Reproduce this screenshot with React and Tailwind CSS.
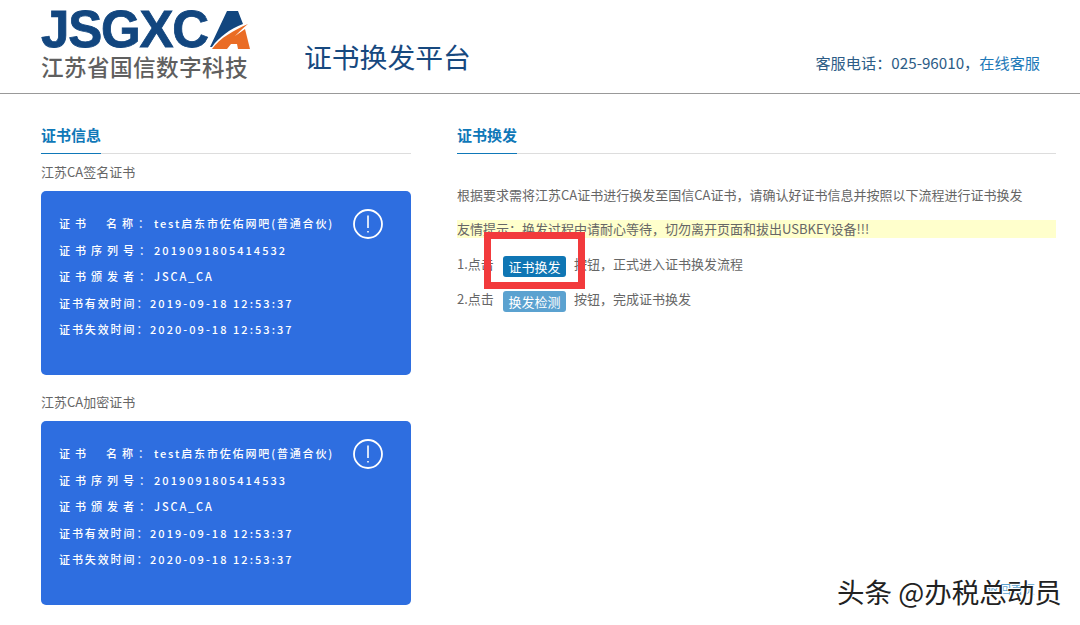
import React from "react";

const FONT = "font-['Noto_Sans_CJK_SC','Noto_Sans',sans-serif]";

function LogoA() {
  return (
    <svg width="40" height="38" viewBox="0 0 40 38" className="shrink-0">
      <path d="M17 0 H28 L33 13 C20 18 9 26 2 36 H0 Z" fill="#12467f" />
      <path d="M38 13 C24 19 10 27 2 38 H17 L21 33 H27 L28 38 H40 L35 18 L25 25 C29 21 33 17 38 13 Z" fill="#ea6c25" />
    </svg>
  );
}

function AlertIcon() {
  return (
    <svg width="30" height="30" viewBox="0 0 30 30" className="shrink-0">
      <circle cx="15" cy="15" r="14" fill="none" stroke="white" strokeWidth="1.8" />
      <path d="M15 6.5 V19 M15 22 V23.5" stroke="white" strokeWidth="1.6" />
    </svg>
  );
}

function Row({ label, value, wide, digits }) {
  return (
    <div className="flex h-[26.5px] items-center text-[11px] font-medium text-white whitespace-pre">
      <span className={wide ? "w-[91px] tracking-[1.9px]" : "w-[95px] tracking-[5px]"}>{label}</span>
      <span className={digits ? "tracking-[2.05px]" : "tracking-[1.85px]"}>{value}</span>
    </div>
  );
}

function CertCard({ name, serial, start, end }) {
  return (
    <div className="relative h-[184px] rounded-[5px] bg-[#2e6ee0] pl-[18px] pt-[19px]">
      <Row label="证书  名称：" value={name} />
      <Row label="证书序列号：" value={serial} digits />
      <Row label="证书颁发者：" value="JSCA_CA" />
      <Row label="证书有效时间：" value={start} wide digits />
      <Row label="证书失效时间：" value={end} wide digits />
      <div className="absolute right-[28px] top-[18px]">
        <AlertIcon />
      </div>
    </div>
  );
}

function SectionTitle({ children }) {
  return (
    <div className="flex h-[28px] border-b border-[#dddddd]">
      <span className="-mb-px h-[28px] border-b border-[#0f78b8] text-[15px] font-bold leading-[18px] text-[#0f78b8]">
        {children}
      </span>
    </div>
  );
}

function Step({ no, button, color, text, top }) {
  return (
    <div className={`flex h-[21px] items-center text-[13px] text-[#666666] ${top}`}>
      <span className="mb-[5px] w-[46px]">{no}</span>
      <span className={`flex h-[21px] w-[63px] items-center justify-center rounded-[3px] text-white ${color}`}>{button}</span>
      <span className="mb-[5px] ml-[8px]">{text}</span>
    </div>
  );
}

export default function App() {
  return (
    <div className={`relative h-[625px] w-[1080px] overflow-hidden bg-white ${FONT}`}>
      <header className="flex h-[94px] items-start border-b border-[#999999] pl-[41px] pr-[40px]">
        <div className="w-[263px] pt-[10px]">
          <div className="flex h-[40px] items-center">
            <span className="w-[169px] font-['Liberation_Sans',sans-serif] text-[51px] font-bold leading-[40px] tracking-[-1.2px] text-[#12467f] [-webkit-text-stroke:0.8px_#12467f]">
              JSGXC
            </span>
            <LogoA />
          </div>
          <div className="mt-[2px] text-[22.6px] font-medium leading-[30px] tracking-[0.4px] text-[#5f5f5f]">江苏省国信数字科技</div>
        </div>
        <h1 className="pt-[36px] text-[27.8px] leading-[40px] text-[#17497f]">证书换发平台</h1>
        <div className="ml-auto pt-[50px] text-[15.2px] leading-[24px] text-[#2d5c86]">
          客服电话：025-96010，<span className="text-[#1c78b8]">在线客服</span>
        </div>
      </header>

      <main className="flex gap-[46px] pl-[41px] pr-[24px] pt-[32px]">
        <section className="w-[370px]">
          <SectionTitle>证书信息</SectionTitle>
          <div className="mt-[9px] mb-[10px] text-[13px] leading-[18px] text-[#666666]">江苏CA签名证书</div>
          <CertCard name="test启东市佐佑网吧(普通合伙)" serial="2019091805414532" start="2019-09-18 12:53:37" end="2020-09-18 12:53:37" />
          <div className="mt-[18px] mb-[10px] text-[13px] leading-[18px] text-[#666666]">江苏CA加密证书</div>
          <CertCard name="test启东市佐佑网吧(普通合伙)" serial="2019091805414533" start="2019-09-18 12:53:37" end="2020-09-18 12:53:37" />
        </section>

        <section className="flex-1">
          <SectionTitle>证书换发</SectionTitle>
          <p className="mt-[32px] text-[13px] leading-[18px] text-[#666666]">
            根据要求需将江苏CA证书进行换发至国信CA证书，请确认好证书信息并按照以下流程进行证书换发
          </p>
          <p className="mt-[16px] h-[18px] bg-[#ffffcc] text-[13px] leading-[18px] text-[#666666]">
            友情提示：换发过程中请耐心等待，切勿离开页面和拔出USBKEY设备!!!
          </p>
          <Step no="1.点击" button="证书换发" color="bg-[#0f76b4]" text="按钮，正式进入证书换发流程" top="mt-[18px]" />
          <Step no="2.点击" button="换发检测" color="bg-[#5ba2d0]" text="按钮，完成证书换发" top="mt-[14px]" />
        </section>
      </main>

      {/* annotation and watermark lie over the page */}
      <div className="absolute left-[484px] top-[232px] h-[57px] w-[101px] border-[7px] border-[#f23a3c]" />
      <div className="absolute left-[987px] top-[580px] text-[12px] text-[#5ba2d0]">返回首页</div>
      <div className="absolute left-[837px] top-[572px] text-[27.5px] leading-[38px] text-[#222222] [text-shadow:1px_1px_0_#ffffff,-1px_-1px_0_#ffffff]">
        头条 @办税总动员
      </div>
    </div>
  );
}
